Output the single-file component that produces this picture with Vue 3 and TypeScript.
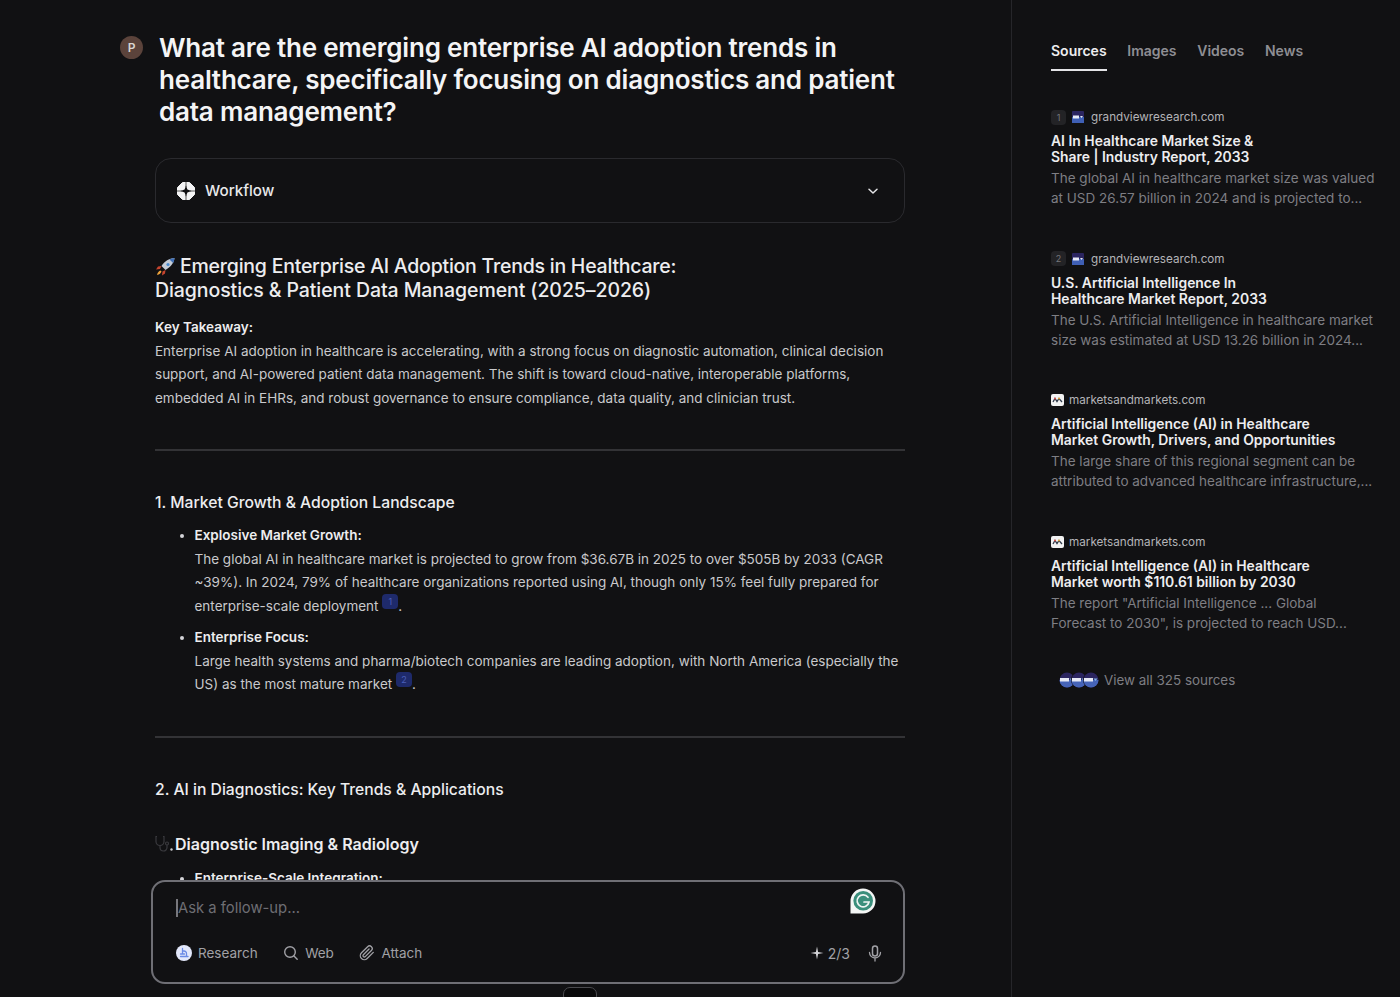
<script setup lang="ts">
interface Source {
  num?: number
  kind: 'gv' | 'mm'
  domain: string
  title: string[]
  desc: string[]
}

const tabs = ['Sources', 'Images', 'Videos', 'News']

const sources: Source[] = [
  {
    num: 1,
    kind: 'gv',
    domain: 'grandviewresearch.com',
    title: ['AI In Healthcare Market Size &', 'Share | Industry Report, 2033'],
    desc: ['The global AI in healthcare market size was valued', 'at USD 26.57 billion in 2024 and is projected to...'],
  },
  {
    num: 2,
    kind: 'gv',
    domain: 'grandviewresearch.com',
    title: ['U.S. Artificial Intelligence In', 'Healthcare Market Report, 2033'],
    desc: ['The U.S. Artificial Intelligence in healthcare market', 'size was estimated at USD 13.26 billion in 2024...'],
  },
  {
    kind: 'mm',
    domain: 'marketsandmarkets.com',
    title: ['Artificial Intelligence (AI) in Healthcare', 'Market Growth, Drivers, and Opportunities'],
    desc: ['The large share of this regional segment can be', 'attributed to advanced healthcare infrastructure,...'],
  },
  {
    kind: 'mm',
    domain: 'marketsandmarkets.com',
    title: ['Artificial Intelligence (AI) in Healthcare', 'Market worth $110.61 billion by 2030'],
    desc: ['The report "Artificial Intelligence ... Global', 'Forecast to 2030", is projected to reach USD...'],
  },
]
</script>

<template>
  <div class="page">
    <main class="main">
      <div class="scroll">
        <div class="question">
          <div class="avatar">P</div>
          <h1>What are the emerging enterprise AI adoption trends in<br />healthcare, specifically focusing on diagnostics and patient<br />data management?</h1>
        </div>

        <div class="article">
          <div class="workflow">
            <svg class="wf-icon" width="18" height="18" viewBox="0 0 18 18">
              <path d="M5.500.500h7L17.500 5.500v7l-5 5h-7l-5-5v-7Z" fill="#f4f4f5" stroke="#f4f4f5" stroke-linejoin="round" />
              <path d="M9 3.500 10.400 7.600 14.500 9 10.400 10.400 9 14.500 7.600 10.400 3.500 9 7.600 7.600Z" fill="#111113" />
              <path d="M9 0v5M9 13v5M0 9h5M13 9h5" stroke="#111113" stroke-width="0.700" />
            </svg>
            <span class="wf-label">Workflow</span>
            <svg class="chev" width="12" height="12" viewBox="0 0 12 12" fill="none">
              <path d="M2 4.200 6 8l4-3.800" stroke="#e4e4e7" stroke-width="1.500" stroke-linecap="round" stroke-linejoin="round" />
            </svg>
          </div>

          <h2>
            <svg class="rocket" width="21" height="19" viewBox="0 0 21 19">
              <path d="M19.500 1C14 1.500 9.500 4 6.500 9l4 4c5-3 8.500-7 9-12Z" fill="#c4cbd6" />
              <path d="M19.500 1c-2 .2-3.600.7-5 1.400l3.600 3.600c.8-1.400 1.200-3 1.400-5Z" fill="#3f6fb5" />
              <circle cx="13" cy="7.500" r="1.600" fill="#4a8bd0" />
              <path d="M6.500 9 3 9.500 1 12.500l4-.5ZM10.500 13 10 16.500 7 18.500l.5-4Z" fill="#c8452f" />
              <path d="M5.500 13.500C4 14 2.500 15.500 2 18c2.500-.5 4-2 4.500-3.500Z" fill="#eda33c" />
            </svg>
            <span class="h2-first">Emerging Enterprise AI Adoption Trends in Healthcare:</span><br />Diagnostics &amp; Patient Data Management (2025–2026)
          </h2>

          <p class="body takeaway"><strong>Key Takeaway:</strong><br />Enterprise AI adoption in healthcare is accelerating, with a strong focus on diagnostic automation, clinical decision<br />support, and AI-powered patient data management. The shift is toward cloud-native, interoperable platforms,<br />embedded AI in EHRs, and robust governance to ensure compliance, data quality, and clinician trust.</p>

          <hr class="rule first" />

          <h3>1. Market Growth &amp; Adoption Landscape</h3>

          <ul class="list">
            <li>
              <strong>Explosive Market Growth:</strong><br />The global AI in healthcare market is projected to grow from $36.67B in 2025 to over $505B by 2033 (CAGR<br />~39%). In 2024, 79% of healthcare organizations reported using AI, though only 15% feel fully prepared for<br />enterprise-scale deployment <sup class="cite">1</sup>.
            </li>
            <li>
              <strong>Enterprise Focus:</strong><br />Large health systems and pharma/biotech companies are leading adoption, with North America (especially the<br />US) as the most mature market <sup class="cite">2</sup>.
            </li>
          </ul>

          <hr class="rule second" />

          <h3>2. AI in Diagnostics: Key Trends &amp; Applications</h3>

          <h4>
            <svg class="steth" width="18" height="17" viewBox="0 0 18 17" fill="none">
              <path d="M2 1.500H1v5a4 4 0 0 0 8 0v-5H8M5 10.500v2a3.500 3.500 0 0 0 7 0V10" stroke="#3a3a3e" stroke-width="1.200" />
              <circle cx="12" cy="8.500" r="1.500" stroke="#3a3a3e" stroke-width="1.200" />
              <circle cx="16.500" cy="14.500" r="1.200" fill="#c9c9cc" />
            </svg>
            Diagnostic Imaging &amp; Radiology
          </h4>

          <ul class="list last">
            <li><strong>Enterprise-Scale Integration:</strong></li>
          </ul>
        </div>
      </div>

      <div class="composer">
        <div class="input-row">
          <span class="caret"></span>
          <span class="placeholder">Ask a follow-up...</span>
          <svg class="grammarly" width="26" height="26" viewBox="0 0 26 26">
            <path d="M13 .500A12.500 12.500 0 0 1 13 25.500H.500V13A12.500 12.500 0 0 1 13 .500Z" fill="#f4f6f5" />
            <circle cx="13.200" cy="12.800" r="9.800" fill="#3a8f7c" />
            <path d="M18 9.300A6 6 0 1 0 19 14h-5" fill="none" stroke="#eef5f3" stroke-width="1.700" stroke-linecap="round" />
          </svg>
        </div>
        <div class="tools">
          <div class="tool">
            <svg width="16" height="16" viewBox="0 0 16 16">
              <circle cx="8" cy="8" r="8" fill="#e3e8fb" />
              <path d="M6.500 3.500v5M6.500 6h1.500a2.500 2.500 0 0 1 2.500 2.500V11M4.500 11.500h7.500M4.500 9h4" fill="none" stroke="#6a8ae6" stroke-width="1.300" stroke-linecap="round" />
            </svg>
            <span>Research</span>
          </div>
          <div class="tool">
            <svg width="16" height="16" viewBox="0 0 16 16" fill="none">
              <circle cx="7" cy="7" r="5.300" stroke="#a1a1a6" stroke-width="1.400" />
              <path d="m11 11 3.200 3.200" stroke="#a1a1a6" stroke-width="1.400" stroke-linecap="round" />
            </svg>
            <span>Web</span>
          </div>
          <div class="tool">
            <svg width="16" height="16" viewBox="0 0 24 24" fill="none">
              <path d="M21.440 11.050l-9.190 9.190a6 6 0 0 1-8.490-8.490l9.190-9.190a4 4 0 0 1 5.660 5.660l-9.200 9.190a2 2 0 0 1-2.830-2.830l8.490-8.480" stroke="#a1a1a6" stroke-width="2" stroke-linecap="round" stroke-linejoin="round" />
            </svg>
            <span>Attach</span>
          </div>
          <div class="spacer"></div>
          <svg class="spark" width="14" height="14" viewBox="0 0 14 14">
            <path d="M7 .500 8.100 5.900 13.500 7 8.100 8.100 7 13.500 5.900 8.100.500 7 5.900 5.900Z" fill="#d4d4d8" />
          </svg>
          <span class="count">2/3</span>
          <svg class="mic" width="14" height="17" viewBox="0 0 14 17" fill="none">
            <rect x="4.500" y="1" width="5" height="10" rx="2.500" stroke="#a1a1a6" stroke-width="1.500" />
            <path d="M1.500 7.500a5.500 5.500 0 0 0 11 0M7 13v3" stroke="#a1a1a6" stroke-width="1.300" stroke-linecap="round" />
          </svg>
        </div>
      </div>

      <div class="pill"></div>
    </main>

    <aside class="side">
      <nav class="tabs">
        <span v-for="(tab, i) in tabs" :key="tab" class="tab" :class="{ active: i === 0 }">{{ tab }}</span>
      </nav>

      <section class="sources">
        <article v-for="(s, idx) in sources" :key="idx" class="source">
          <div class="meta">
            <span v-if="s.num" class="num">{{ s.num }}</span>
            <svg v-if="s.kind === 'gv'" class="fav gv" width="12" height="12" viewBox="0 0 12 12">
              <rect width="12" height="12" rx="1" fill="#2b2560" />
              <rect y="6" width="12" height="6" fill="#3f5fb5" />
              <rect x="1" y="4.500" width="6" height="3" fill="#e6e9f5" />
              <path d="M8 5h3L9.500 7Z" fill="#e6e9f5" />
            </svg>
            <svg v-else class="fav" width="13" height="12" viewBox="0 0 13 12">
              <rect width="13" height="12" rx="2" fill="#f2f2f2" />
              <path d="M2 8 4 4.500 6 7.500 8 4.500 11 8" fill="none" stroke="#2f3a4a" stroke-width="1.300" />
              <circle cx="4" cy="4.500" r="1" fill="#d9534f" />
              <circle cx="8" cy="4.500" r="1" fill="#e3a63b" />
            </svg>
            <span class="domain">{{ s.domain }}</span>
          </div>
          <h5><template v-for="(line, j) in s.title" :key="j">{{ line }}<br /></template></h5>
          <p><template v-for="(line, j) in s.desc" :key="j">{{ line }}<br /></template></p>
        </article>
      </section>

      <div class="view-all">
        <div class="stack">
          <svg v-for="n in 3" :key="n" width="16" height="16" viewBox="0 0 16 16">
            <defs>
              <clipPath :id="'c' + n"><circle cx="8" cy="8" r="7.500" /></clipPath>
            </defs>
            <circle cx="8" cy="8" r="8" fill="#111113" />
            <g :clip-path="'url(#c' + n + ')'">
              <rect width="16" height="16" fill="#2b2560" />
              <rect y="8" width="16" height="8" fill="#4664b8" />
              <rect x="1" y="6" width="9" height="3.500" fill="#e6e9f5" />
              <path d="M10.500 6.500h4l-2 2.500Z" fill="#7fb0e8" />
            </g>
          </svg>
        </div>
        <span>View all 325 sources</span>
      </div>
    </aside>
  </div>
</template>

<style>
html, body {
  margin: 0;
  background: #111113;
}
</style>

<style scoped>
.page {
  display: flex;
  height: 997px;
  overflow: hidden;
  background: #111113;
  color: #e8e8ea;
  font-family: Inter, "Liberation Sans", sans-serif;
}

.main {
  position: relative;
  width: 1011px;
  flex: none;
  border-right: 1px solid #26262a;
  box-sizing: content-box;
}

.scroll {
  height: 880px;
  overflow: hidden;
  padding: 32px 0 0 120px;
  box-sizing: border-box;
}

.question {
  display: flex;
  gap: 16px;
}

.avatar {
  width: 23px;
  height: 23px;
  margin-top: 4px;
  border-radius: 50%;
  background: #5b433b;
  color: #d9d5d3;
  font-size: 12px;
  font-weight: 600;
  line-height: 23px;
  text-align: center;
  flex: none;
}

h1 {
  margin: 0;
  font-size: 26px;
  line-height: 32px;
  font-weight: 600;
  letter-spacing: -0.2px;
  color: #f4f4f5;
  white-space: nowrap;
}

.article {
  width: 750px;
  margin-left: 35px;
  margin-top: 30px;
}

.workflow {
  display: flex;
  align-items: center;
  height: 65px;
  padding: 0 25px 0 21px;
  border: 1px solid #2a2a2e;
  border-radius: 16px;
  box-sizing: border-box;
}

.wf-icon {
  flex: none;
}

.wf-label {
  margin-left: 10px;
  font-size: 15.200px;
  font-weight: 500;
  color: #e8e8ea;
}

.chev {
  margin-left: auto;
}

h2 {
  margin: 31px 0 0;
  font-size: 19.500px;
  line-height: 24px;
  font-weight: 500;
  letter-spacing: -0.08px;
  color: #ededef;
  white-space: nowrap;
}

.h2-first {
  letter-spacing: -0.23px;
}

.rocket {
  vertical-align: -3px;
  margin-right: 4px;
}

.body,
.list li {
  font-size: 13.500px;
  line-height: 23.500px;
  color: #c9c9cc;
  white-space: nowrap;
}

strong {
  font-weight: 600;
  color: #ededef;
}

.takeaway {
  margin: 14px 0 0;
}

.rule {
  height: 2px;
  border: 0;
  margin: 0;
  background: #333336;
}

.rule.first {
  margin-top: 39px;
}

h3 {
  margin: 41px 0 0;
  font-size: 15.700px;
  line-height: 22px;
  font-weight: 500;
  color: #ededef;
}

.list {
  margin: 10px 0 0;
  padding: 0 0 0 39.500px;
}

.list.last {
  margin-top: 12px;
}

.list li {
  margin-bottom: 8px;
}

.list li::marker {
  color: #d4d4d8;
}

.cite {
  display: inline-block;
  min-width: 16px;
  height: 15px;
  margin-top: -6px;
  border-radius: 4px;
  background: #1e2a6b;
  color: #4b5fb8;
  font-size: 9px;
  line-height: 15px;
  text-align: center;
  vertical-align: 6px;
}

.rule.second {
  margin-top: 39px;
}

h4 {
  margin: 32px 0 0;
  font-size: 16px;
  line-height: 22px;
  font-weight: 600;
  color: #ededef;
}

.steth {
  vertical-align: -2px;
  margin-right: -2px;
}

.composer {
  position: absolute;
  left: 151px;
  top: 880px;
  width: 754px;
  height: 104px;
  box-sizing: border-box;
  border: 2px solid #6f6f75;
  border-radius: 14px;
  background: #111113;
  padding: 0 21px 0 23px;
}

.input-row {
  position: relative;
  display: flex;
  align-items: center;
  height: 52px;
}

.caret {
  width: 2px;
  height: 18px;
  background: #77777c;
}

.placeholder {
  font-size: 14.800px;
  color: #6e6e73;
}

.grammarly {
  position: absolute;
  right: 6px;
  top: 6px;
}

.tools {
  display: flex;
  align-items: center;
  height: 24px;
  margin-top: 7px;
  font-size: 13.500px;
  color: #a1a1a6;
}

.tool {
  display: flex;
  align-items: center;
  gap: 6px;
  margin-right: 25.500px;
}

.spacer {
  flex: 1;
}

.count {
  margin-left: 4px;
  font-size: 14px;
}

.mic {
  margin-left: 18px;
}

.pill {
  position: absolute;
  left: 563px;
  top: 987px;
  width: 34px;
  height: 16px;
  box-sizing: border-box;
  border: 1px solid #4a4a4e;
  border-radius: 7px;
  background: #09090a;
}

.side {
  flex: 1;
  padding: 0 0 0 39px;
  min-width: 0;
}

.tabs {
  display: flex;
  gap: 20.700px;
  margin-top: 31px;
  height: 40px;
}

.tab {
  font-size: 14px;
  line-height: 39px;
  height: 40px;
  box-sizing: border-box;
  font-weight: 600;
  color: #8e8e93;
}

.tab.active {
  color: #ededef;
  border-bottom: 2px solid #e4e4e7;
}

.sources {
  display: flex;
  flex-direction: column;
  gap: 42.600px;
  margin-top: 38px;
}

.source h5 {
  margin: 8px 0 0;
  font-size: 13.900px;
  line-height: 16px;
  font-weight: 600;
  color: #ededef;
  white-space: nowrap;
}

.source p {
  margin: 3px 0 0;
  font-size: 13.500px;
  line-height: 20px;
  color: #7e7e83;
  white-space: nowrap;
}

.meta {
  display: flex;
  align-items: center;
  height: 16px;
}

.num {
  width: 15px;
  height: 15px;
  margin-right: 6px;
  border-radius: 4px;
  background: #232326;
  color: #77777c;
  font-size: 9px;
  line-height: 15px;
  text-align: center;
}

.fav {
  flex: none;
  margin-right: 5px;
}

.fav.gv {
  margin-right: 7px;
}

.domain {
  font-size: 11.700px;
  color: #b4b4b8;
}

.view-all {
  display: flex;
  align-items: center;
  gap: 5px;
  margin: 39px 0 0 8px;
  font-size: 13.400px;
  color: #7e7e83;
}

.stack {
  display: flex;
}

.stack svg + svg {
  margin-left: -4px;
}
</style>
